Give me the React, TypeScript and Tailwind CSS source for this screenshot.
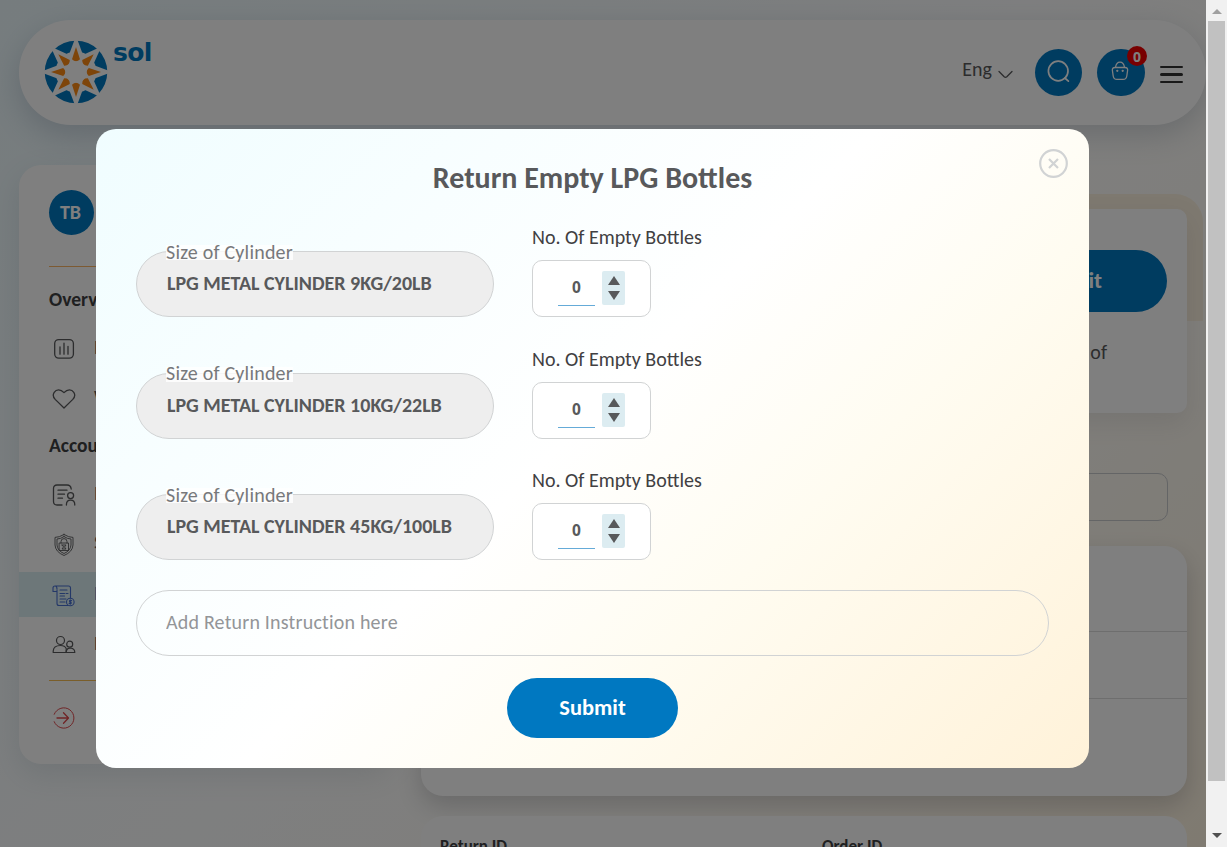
import type { ReactNode } from "react";

const cylinders = [
  "LPG METAL CYLINDER 9KG/20LB",
  "LPG METAL CYLINDER 10KG/22LB",
  "LPG METAL CYLINDER 45KG/100LB",
];

const rays = [0, 45, 90, 135, 180, 225, 270, 315];

function SolLogo() {
  return (
    <div className="flex gap-[5px]">
      <svg width="64" height="64" viewBox="-32 -32 64 64" className="mt-[20px]">
        <circle r="31.3" fill="#0078c1" />
        <circle r="20.5" fill="#fff" />
        {rays.map((a) => (
          <g key={a} transform={`rotate(${a})`}>
            <path d="M0-36 L8.2-14 H-8.2Z" fill="#fff" />
            <path d="M0-25 L4-12.8 Q0-8.5-4-12.8Z" fill="#fc8a14" />
          </g>
        ))}
        <circle r="10.5" fill="#fff" />
      </svg>
      <span className="mt-[16px] font-['DejaVu_Sans',sans-serif] text-[25px] font-bold leading-[34px] tracking-[-0.6px] text-[#0078c1]">sol</span>
    </div>
  );
}

function Header() {
  return (
    <header className="ml-[19px] mt-[20px] flex h-[105px] w-[1187px] rounded-[52px] bg-white pl-[25px] shadow-[0_10px_30px_rgba(60,80,110,0.22)]">
      <SolLogo />
      <div className="ml-auto flex">
        <span className="mt-[36px] text-[20px] leading-[26px] text-[#58595b]">Eng</span>
        <svg className="ml-[6px] mt-[50px]" width="15" height="10" viewBox="0 0 15 10" fill="none" stroke="#58595b" strokeWidth="1.3" strokeLinecap="round" strokeLinejoin="round">
          <path d="M1 1.5 6.2 6.8Q7.5 8 8.8 6.8L14 1.5" />
        </svg>
        <div className="ml-[22px] mt-[29px] flex h-[47px] w-[47px] items-center justify-center rounded-full bg-[#0078c1]">
          <svg className="-mt-[1px]" width="24" height="24" viewBox="0 0 24 24" fill="none" stroke="#fff" strokeWidth="1.7" strokeLinecap="round">
            <circle cx="11.2" cy="11" r="9.8" />
            <path d="m17.8 18 3.6 3.2" />
          </svg>
        </div>
        <div className="relative ml-[15px] mt-[29px] flex h-[47px] w-[48px] items-center justify-center rounded-full bg-[#0078c1]">
          <svg className="-ml-[2px] -mt-[3px]" width="18" height="20" viewBox="0 0 18 20" fill="none" stroke="#fff" strokeWidth="1.3" strokeLinecap="round">
            <path d="M4 6.5H14Q17 6.5 16.6 9.5L15.8 15Q15.3 18.4 12 18.4H6Q2.7 18.4 2.2 15L1.4 9.5Q1 6.5 4 6.5Z" />
            <path d="M4.5 6.3C5 3.2 6.3 1.2 9 1.2S13 3.2 13.5 6.3" />
            <circle cx="6.3" cy="9.8" r=".5" fill="#fff" />
            <circle cx="11.7" cy="9.8" r=".5" fill="#fff" />
          </svg>
          <span className="absolute -top-[3px] left-[30px] flex h-[20px] w-[20px] items-center justify-center rounded-full bg-[#f00000] font-['Open_Sans',sans-serif] text-[14px] font-bold text-white">0</span>
        </div>
        <div className="ml-[15px] mr-[23px] mt-[45.5px] flex w-[23px] flex-col gap-[5.2px]">
          <i className="h-[2.5px] rounded bg-[#333]" />
          <i className="h-[2.5px] rounded bg-[#333]" />
          <i className="h-[2.5px] rounded bg-[#333]" />
        </div>
      </div>
    </header>
  );
}

function NavIcon({ children, stroke = "#58595b" }: { children: ReactNode; stroke?: string }) {
  return (
    <svg width="24" height="24" viewBox="0 0 24 24" fill="none" stroke={stroke} strokeWidth="1.3" strokeLinecap="round" strokeLinejoin="round">
      {children}
    </svg>
  );
}

function NavItem({ label, icon, className }: { label: string; icon: ReactNode; className: string }) {
  return (
    <div className={`flex items-center pl-[33px] text-[20px] ${className}`}>
      {icon}
      <span className="ml-[18px] pb-[5px]">{label}</span>
    </div>
  );
}

function Sidebar() {
  return (
    <aside className="ml-[19px] flex h-[599px] w-[372px] shrink-0 flex-col rounded-[22px] bg-white text-[#58595b] shadow-[0_10px_30px_rgba(60,90,110,0.13)]">
      <div className="ml-[30px] mt-[25px] flex h-[45px] w-[45px] items-center justify-center rounded-full bg-[#0078c1] pb-[2px] pr-[2px] text-[20px] font-bold text-white">TB</div>
      <div className="ml-[30px] mt-[31px] h-px bg-[#fbb564]" />
      <h2 className="ml-[30px] mt-[19px] h-[27px] text-[19.5px] font-bold leading-[26px] text-[#3f4042]">Overview</h2>
      <NavItem
        className="mt-[11px] h-[50px]"
        label="Dashboard"
        icon={
          <NavIcon>
            <rect x="2.7" y="2.6" width="18.7" height="18.5" rx="4" />
            <path d="M8 9.8v7.4M12 6.2v11M16 9.3v7.9" />
          </NavIcon>
        }
      />
      <NavItem
        className="h-[50px]"
        label="Wishlist"
        icon={
          <NavIcon>
            <path d="M12 21 3.2 12.4C1.2 10.3.8 7.5 2.2 5.3 4.3 2.1 8.5 1.8 12 5.6 15.5 1.8 19.7 2.1 21.8 5.3 23.2 7.5 22.8 10.3 20.8 12.4Z" />
          </NavIcon>
        }
      />
      <h2 className="ml-[30px] mt-[8px] h-[27px] text-[19.5px] font-bold leading-[26px] text-[#3f4042]">Account</h2>
      <NavItem
        className="mt-[11px] h-[50px]"
        label="Profile"
        icon={
          <NavIcon>
            <path d="M10 22H5Q1.5 22 1.5 18.5V5.5Q1.5 2 5 2H15Q18.8 2 19.2 6" />
            <path d="M6 7.2h9M6 11.2h6.5M6 15.2h4.5" />
            <circle cx="18.6" cy="12.6" r="3" />
            <path d="M14.4 22q0-4.8 4.2-4.8t4.2 4.8" />
          </NavIcon>
        }
      />
      <NavItem
        className="h-[49px]"
        label="Security"
        icon={
          <NavIcon>
            <g strokeWidth=".9">
              <path d="M12 1.5Q7 4.5 3 4.4V12Q3.5 19 12 22.5 20.5 19 21 12V4.4Q17 4.5 12 1.5Z" />
              <path d="M12 3.6Q8.5 6 5 6V12Q5.5 17.8 12 20.5 18.5 17.8 19 12V6Q15.5 6 12 3.6Z" />
              <rect x="7.5" y="10" width="9" height="7.5" />
              <path d="M9 10V8.6a3 3 0 0 1 6 0V10M10 12h4l-1.5 2 1.5 2h-4l1.5-2z" />
            </g>
          </NavIcon>
        }
      />
      <NavItem
        className="mt-[3px] h-[45px] bg-[#dbeef3] pt-[2px] text-[#0078c1]"
        label="Returns"
        icon={
          <NavIcon stroke="#4870d0">
            <g strokeWidth="1.1">
              <path d="M5 7.5H1V4Q1 2 3 2H16.5Q18.5 2 18.5 4V14M5 6V19.5Q5 21.5 7 21.5H16M3 2Q5 2 5 5" />
              <path d="M8 6h7M8 9.5h4.5M14 9.5h2M8 12h4.5M8 15h6M8 18h5" />
              <circle cx="18.3" cy="18" r="3.8" />
              <path d="M19.6 16.5h-2l0 1.5h1.5v1.5h-2M18.3 15.7v4.6" />
            </g>
          </NavIcon>
        }
      />
      <NavItem
        className="mt-[4px] h-[48px]"
        label="Family"
        icon={
          <NavIcon>
            <g strokeWidth="1.2">
              <circle cx="8.5" cy="7.5" r="4" />
              <path d="M1.2 19.5v-1.5Q1.5 12.5 8.5 12.5 13 12.5 14.2 15.5V19.5Z" />
              <circle cx="17.7" cy="11.2" r="3" />
              <path d="M14.2 19.5v-1.5Q15 15 18.5 15 22.8 15.5 22.8 19.5Z" />
            </g>
          </NavIcon>
        }
      />
      <div className="ml-[30px] mt-[11px] h-px bg-[#f5bd55]" />
      <div className="ml-[33px] mt-[25px]">
        <NavIcon stroke="#e0484c">
          <path d="M2.2 8.3A10.2 10.2 0 1 1 2.2 15.7" strokeWidth="1" />
          <path d="M5 12H16M11.5 6.8 16.5 12l-5 5.2" />
        </NavIcon>
      </div>
    </aside>
  );
}

function Content() {
  return (
    <main className="ml-[30px] w-[782px] pt-[29px]">
      <div className="h-[219px] rounded-tr-[28px] bg-[linear-gradient(#fcf2e0,#fcf2e0)] bg-[length:782px_127px] bg-no-repeat pr-[16px] pt-[15px]">
        <div className="flex h-[204px] flex-col items-end rounded-[10px] bg-white pr-[20px] pt-[41px] shadow-[0_10px_26px_rgba(60,60,80,0.1)]">
          <div className="flex h-[62px] w-[180px] items-center justify-end rounded-full bg-[#0078c1] pb-[2px] pr-[65px] text-[23px] font-bold text-white">Submit</div>
          <p className="mr-[60px] mt-[26px] text-[20px] leading-[28px] text-[#58595b]">return of</p>
        </div>
      </div>
      <div className="mt-[60px] h-[48px] w-[747px] rounded-[10px] border border-[#c8cacd]" />
      <div className="mt-[25px] h-[250px] w-[766px] rounded-[22px] bg-white pt-[85px] shadow-[0_10px_24px_rgba(40,40,50,0.2)]">
        <div className="h-[68px] border-y border-[#dcdcdc]" />
      </div>
      <div className="mt-[20px] flex h-[60px] w-[766px] rounded-[22px] bg-white pl-[19px] pt-[19px] text-[17px] font-bold leading-[24px] text-[#3f4042]">
        <span className="w-[382px]">Return ID</span>
        <span>Order ID</span>
      </div>
    </main>
  );
}

function CylinderRow({ name }: { name: string }) {
  return (
    <div className="flex h-[121.5px]">
      <div className="relative mt-[24px] flex h-[66px] w-[358px] items-center rounded-full border border-[#d1d3d4] bg-[#eee] pl-[30px]">
        <label className="absolute -top-[7px] left-[29px] flex h-[15px] items-center whitespace-nowrap bg-white/80 pb-[2px] text-[20px] tracking-[0.2px] text-[#77787b]">Size of Cylinder</label>
        <span className="whitespace-nowrap pb-[2px] text-[20px] font-bold text-[#58595b]">{name}</span>
      </div>
      <div className="ml-[38px]">
        <div className="-mt-px h-[34px] whitespace-nowrap text-[20px] leading-[22px] text-[#414042]">No. Of Empty Bottles</div>
        <div className="flex h-[57px] w-[119px] rounded-[10px] border border-[#d1d3d4] bg-white pl-[25px] pt-[10px]">
          <div className="flex h-[35px] w-[37px] items-center justify-center border-b border-[#65abd8] font-['Open_Sans',sans-serif] text-[15.5px] font-bold text-[#58595b]">0</div>
          <div className="ml-[7px] flex h-[34px] w-[23px] flex-col items-center justify-center gap-[6px] rounded-[2px] bg-[#dcecf1]">
            <svg width="12" height="9" viewBox="0 0 12 9"><path d="M6 0 12 9H0Z" fill="#58595b" /></svg>
            <svg width="12" height="9" viewBox="0 0 12 9"><path d="M0 0H12L6 9Z" fill="#58595b" /></svg>
          </div>
        </div>
      </div>
    </div>
  );
}

function ReturnDialog() {
  return (
    <section className="relative ml-[96px] mt-[129px] h-[639px] w-[993px] rounded-[20px] bg-[linear-gradient(135deg,#f0fdff_0%,#ffffff_48%,#fffcf1_67%,#fff2d9_100%)] px-[40px] pt-[32px]">
      <button className="absolute right-[21px] top-[20px]" aria-label="Close">
        <svg width="29" height="29" viewBox="0 0 29 29" fill="none" stroke="#d1d3d4" strokeWidth="2.2">
          <circle cx="14.5" cy="14.5" r="13.3" />
          <path d="m10 10 9 9m0-9-9 9" />
        </svg>
      </button>
      <h1 className="h-[66px] text-center text-[30px] font-bold leading-[33px] text-[#58595b]">Return Empty LPG Bottles</h1>
      {cylinders.map((name) => (
        <CylinderRow key={name} name={name} />
      ))}
      <input placeholder="Add Return Instruction here" className="-mt-[1.5px] block h-[66px] w-[913px] rounded-full border border-[#d1d3d4] bg-transparent pb-[2px] pl-[29px] text-[20px] tracking-[0.2px] placeholder:text-[#939598]" />
      <button className="ml-[371px] mt-[22px] block h-[60px] w-[171px] rounded-full bg-[#0078c1] text-[22.5px] font-bold text-white">Submit</button>
    </section>
  );
}

function Scrollbar() {
  return (
    <div className="flex h-[847px] w-[21px] flex-col items-center bg-[#f1f1f1]">
      <svg className="mt-[9px] h-[5px] w-[10px] shrink-0" viewBox="0 0 10 5"><path d="M5 0 10 5H0Z" fill="#a0a0a0" /></svg>
      <div className="mt-[7px] h-[760px] w-[17px] shrink-0 bg-[#c1c1c1]" />
      <svg className="mt-[52px] h-[5px] w-[10px] shrink-0" viewBox="0 0 10 5"><path d="M0 0H10L5 5Z" fill="#505050" /></svg>
    </div>
  );
}

export default function App() {
  return (
    <div className="relative flex h-[847px] w-[1227px] overflow-hidden font-[Calibri,Carlito,Lato,sans-serif]">
      <div className="h-[847px] w-[1206px] overflow-hidden bg-[linear-gradient(135deg,#ecf9fd_0%,#fdfeff_50%,#fffdf8_70%,#fff5e2_100%)]">
        <Header />
        <div className="flex pt-[40px]">
          <Sidebar />
          <Content />
        </div>
      </div>
      <Scrollbar />
      <div className="absolute left-0 top-0 h-[847px] w-[1206px] bg-black/50">
        <ReturnDialog />
      </div>
    </div>
  );
}
